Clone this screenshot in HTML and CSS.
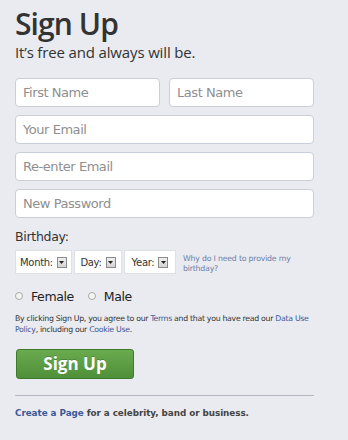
FILE: index.html
```html
<!DOCTYPE html>
<html>
<head>
<meta charset="utf-8">
<link rel="stylesheet" href="styles.css">
</head>
<body>
<div class="page">
  <h1 class="title">Sign Up</h1>
  <p class="sub">It’s free and always will be.</p>
  <div class="row">
    <div class="field half">First Name</div>
    <div class="field half">Last Name</div>
  </div>
  <div class="field">Your Email</div>
  <div class="field">Re-enter Email</div>
  <div class="field">New Password</div>
  <div class="bday-label">Birthday:</div>
  <div class="bday-row">
    <div class="sel sel-month">Month: <span class="arrow"><svg width="5" height="3" viewBox="0 0 5 3"><path d="M0 0h5L2.5 3z" fill="#222"/></svg></span></div>
    <div class="sel sel-day">Day: <span class="arrow"><svg width="5" height="3" viewBox="0 0 5 3"><path d="M0 0h5L2.5 3z" fill="#222"/></svg></span></div>
    <div class="sel sel-year">Year: <span class="arrow"><svg width="5" height="3" viewBox="0 0 5 3"><path d="M0 0h5L2.5 3z" fill="#222"/></svg></span></div>
    <a class="why">Why do I need to provide my birthday?</a>
  </div>
  <div class="gender">
    <span class="radio"></span><span class="glabel">Female</span>
    <span class="radio r2"></span><span class="glabel">Male</span>
  </div>
  <p class="legal">By clicking Sign Up, you agree to our <a>Terms</a> and that you have read our <a>Data Use</a><br><a>Policy</a>, including our <a>Cookie Use</a>.</p>
  <button class="btn">Sign Up</button>
  <hr class="sep">
  <p class="create"><a>Create a Page</a> for a celebrity, band or business.</p>
</div>
</body>
</html>
```
FILE: styles.css
```css
html, body {
  margin: 0;
  padding: 0;
  background: #e9ebf0;
}
.page {
  width: 300px;
  padding: 6px 0 0 15px;
  font-family: "Open Sans", "Liberation Sans", sans-serif;
  color: #333;
}
.title {
  margin: 0;
  font-family: "Open Sans", sans-serif;
  font-weight: 600;
  font-size: 30px;
  line-height: 36px;
  color: #333;
  letter-spacing: -0.9px;
}
.sub {
  margin: 0;
  font-size: 15px;
  line-height: 20px;
  color: #333;
  letter-spacing: -0.15px;
}
.row {
  display: flex;
  gap: 9px;
  margin-top: 16px;
}
.field {
  box-sizing: border-box;
  width: 299px;
  height: 29px;
  margin-bottom: 8px;
  background: #fff;
  border: 1px solid #c9ced8;
  border-radius: 4px;
  padding: 0 0 0 7px;
  font-size: 13px;
  line-height: 27px;
  color: #8f8f8f;
  font-family: "DejaVu Sans", sans-serif;
  letter-spacing: -0.45px;
}
.field.half {
  width: 145px;
}
.bday-label {
  padding-top: 2px;
  font-size: 12.5px;
  line-height: 18px;
  font-family: "DejaVu Sans", sans-serif;
  letter-spacing: -0.3px;
}
.bday-row {
  display: flex;
  align-items: flex-start;
  margin-top: 4px;
  gap: 2px;
}
.sel {
  box-sizing: border-box;
  height: 24px;
  background: #fff;
  border: 1px solid #dde0e6;
  font-family: "DejaVu Sans", sans-serif;
  font-size: 10px;
  color: #333;
  display: flex;
  align-items: center;
  justify-content: center;
  gap: 4px;
  letter-spacing: -0.3px;
}
.sel-month { width: 57px; }
.sel-day { width: 48px; }
.sel-year { width: 52px; }
.arrow {
  width: 10px;
  height: 11px;
  box-sizing: border-box;
  border: 1px solid #8a8a8a;
  background: linear-gradient(#efefef, #d4d4d4);
  display: inline-flex;
  align-items: center;
  justify-content: center;
}
.arrow svg { display: block; }
.why {
  margin-left: 5px;
  width: 125px;
  font-family: "DejaVu Sans", sans-serif;
  font-size: 7.8px;
  line-height: 10px;
  color: #6d7fa8;
  padding-top: 4px;
  letter-spacing: -0.2px;
}
.gender {
  display: flex;
  align-items: center;
  margin-top: 12px;
  height: 20px;
}
.radio {
  width: 6px;
  height: 6px;
  border: 1px solid #aaa;
  border-radius: 50%;
  background: #f4f4f4;
  margin-right: 8px;
}
.r2 { margin-left: 14px; }
.glabel {
  font-family: "DejaVu Sans", sans-serif;
  font-size: 12.5px;
  color: #222;
  letter-spacing: -0.4px;
}
.legal {
  margin: 7px 0 0 0;
  font-family: "DejaVu Sans", sans-serif;
  font-size: 7.8px;
  line-height: 11px;
  color: #333;
  letter-spacing: -0.3px;
  white-space: nowrap;
}
.legal a, .why { text-decoration: none; }
.legal a { color: #3b5998; }
.btn {
  display: block;
  margin: 14px 0 0 1px;
  width: 118px;
  height: 30px;
  border: 1px solid #3d7a2a;
  border-radius: 3px;
  background: linear-gradient(#6aab4f, #4f8f39);
  color: #fff;
  font-family: "Open Sans", sans-serif;
  font-weight: 700;
  font-size: 17px;
  line-height: 26px;
  padding: 0;
  text-shadow: 0 -1px 0 rgba(0,0,0,0.2);
}
.sep {
  margin: 16px 0 0 0;
  width: 299px;
  border: 0;
  border-top: 1px solid #b4b8c2;
  height: 0;
}
.create {
  margin: 12px 0 0 0;
  font-family: "DejaVu Sans", sans-serif;
  font-weight: bold;
  font-size: 8.8px;
  color: #444;
  letter-spacing: -0.05px;
}
.create a { color: #3b5998; text-decoration: none; }
```
